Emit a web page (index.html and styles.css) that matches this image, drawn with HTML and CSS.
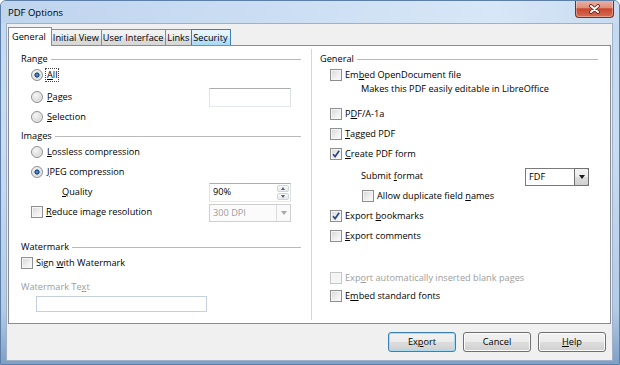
FILE: index.html
```html
<!DOCTYPE html>
<html lang="en">
<head>
  <meta charset="UTF-8">
  <title>PDF Options</title>
  <link rel="stylesheet" href="styles.css">
</head>
<body>
<div class="window">
  <div class="titlebar">
    <span class="title">PDF Options</span>
    <span class="close">
      <svg width="11" height="10" viewBox="0 0 11 10">
        <path d="M2 2 L9 8 M9 2 L2 8" stroke="#5b1c12" stroke-width="3.6" stroke-linecap="round" fill="none"/>
        <path d="M2 2 L9 8 M9 2 L2 8" stroke="#ffffff" stroke-width="2" stroke-linecap="round" fill="none"/>
      </svg>
    </span>
  </div>

  <div class="client">
    <div class="tabs">
      <span class="tab active">General</span>
      <span class="tab">Initial View</span>
      <span class="tab">User Interface</span>
      <span class="tab">Links</span>
      <span class="tab hot">Security</span>
    </div>

    <div class="panel">
      <div class="col col-left">
        <div class="head"><span>Range</span></div>
        <div class="opt"><span class="radio on"></span><span class="focus"><u>A</u>ll</span></div>
        <div class="opt gap-s"><span class="radio"></span><span><u>P</u>ages</span><span class="field textbox"></span></div>
        <div class="opt"><span class="radio"></span><span><u>S</u>election</span></div>

        <div class="head gap-s"><span>Images</span></div>
        <div class="opt"><span class="radio"></span><span><u>L</u>ossless compression</span></div>
        <div class="opt"><span class="radio on"></span><span><u>J</u>PEG compression</span></div>
        <div class="opt sub">
          <span><u>Q</u>uality</span>
          <span class="field spin">
            <span class="spin-value">90%</span>
            <span class="spin-buttons"><span class="spin-btn"><i class="arrow-up"></i></span><span class="spin-btn"><i class="arrow-down"></i></span></span>
          </span>
        </div>
        <div class="opt">
          <span class="check"></span><span><u>R</u>educe image resolution</span>
          <span class="field select disabled"><span class="select-value">300 DPI</span><span class="select-btn"><i class="arrow-down big"></i></span></span>
        </div>

        <div class="head gap-l"><span>Watermark</span></div>
        <div class="opt flush"><span class="check"></span><span>Sign <u>w</u>ith Watermark</span></div>
        <div class="caption disabled">Watermark Te<u>x</u>t</div>
        <div class="textbox wm"></div>
      </div>

      <div class="col col-right">
        <div class="head"><span>General</span></div>
        <div class="opt"><span class="check"></span><span>Em<u>b</u>ed OpenDocument file</span></div>
        <div class="note">Makes this PDF easily editable in LibreOffice</div>
        <div class="opt gap-m"><span class="check"></span><span>P<u>D</u>F/A-1a</span></div>
        <div class="opt"><span class="check"></span><span><u>T</u>agged PDF</span></div>
        <div class="opt"><span class="check on"><svg width="10" height="10" viewBox="0 0 10 10"><path d="M2 5.2 L4.1 7.6 L8.2 1.8" stroke="#2c4a86" stroke-width="1.7" fill="none"/></svg></span><span><u>C</u>reate PDF form</span></div>
        <div class="opt sub gap-s">
          <span>Submit <u>f</u>ormat</span>
          <span class="field select fdf"><span class="select-value">FDF</span><span class="select-btn"><i class="arrow-down big"></i></span></span>
        </div>
        <div class="opt nested"><span class="check"></span><span>Allow duplicate field <u>n</u>ames</span></div>
        <div class="opt"><span class="check on"><svg width="10" height="10" viewBox="0 0 10 10"><path d="M2 5.2 L4.1 7.6 L8.2 1.8" stroke="#2c4a86" stroke-width="1.7" fill="none"/></svg></span><span>Export <u>b</u>ookmarks</span></div>
        <div class="opt"><span class="check"></span><span><u>E</u>xport comments</span></div>
        <div class="opt disabled gap-xl"><span class="check"></span><span>Exp<u>o</u>rt automatically inserted blank pages</span></div>
        <div class="opt tight"><span class="check"></span><span>E<u>m</u>bed standard fonts</span></div>
      </div>
    </div>

    <div class="actions">
      <button class="btn default">Ex<u>p</u>ort</button>
      <button class="btn">Cancel</button>
      <button class="btn"><u>H</u>elp</button>
    </div>
  </div>
</div>
</body>
</html>
```

FILE: styles.css
```css
* { box-sizing: border-box; }
body { margin: 0; font-family: "Open Sans", sans-serif; font-size: 9.2px; line-height: 12px; color: #000; background: #fff; }
u { text-decoration: underline; text-underline-offset: 1px; }
i { display: block; }

/* window frame */
.window { width: 620px; height: 365px; display: flex; flex-direction: column; border: 1px solid #5d7ea6; border-radius: 6px 6px 0 0; overflow: hidden; background: linear-gradient(180deg, #c4d9f0 0, #c9dcf1 40%, #b4cbe6 85%, #7f9fc6 100%); }
.titlebar { display: flex; align-items: flex-start; height: 22px; flex: none; background: linear-gradient(90deg, #bfd5ee 0, #cbdef3 45%, #d8e7f7 80%, #c8dbf1 100%); }
.title { padding: 6px 0 0 7px; font-size: 9.5px; }
.close { display: flex; align-items: center; justify-content: center; width: 39px; height: 18px; margin: -1px 5px 0 auto; border: 1px solid #7a2c1f; border-top: none; border-radius: 0 0 4px 4px; background: linear-gradient(180deg, #ebb3a6 0, #df8f7c 45%, #c9462e 52%, #d66d52 100%); box-shadow: inset 0 0 0 1px rgba(255, 255, 255, 0.35); }

.client { flex: 1; display: flex; flex-direction: column; margin: 0 6px 3px 5px; padding: 3px 1px 0; border: 1px solid #9eb1c8; background: #f0f0f0; }

/* tabs */
.tabs { display: flex; align-items: flex-end; height: 18px; flex: none; position: relative; z-index: 1; }
.tab { display: flex; align-items: center; height: 16px; padding: 0 2px 0 1px; margin-right: -1px; border: 1px solid #898c95; border-bottom: none; background: linear-gradient(180deg, #f4f4f4 0, #ebebeb 50%, #dfdfdf 51%, #d6d6d6 100%); }
.tab.active { height: 19px; margin-bottom: -1px; padding: 0 5px 0 3px; background: #fff; position: relative; z-index: 2; }
.tab.hot { border-color: #3c7fb1; background: linear-gradient(180deg, #eaf6fd 0, #d9f0fc 50%, #bee6fd 51%, #a7d9f5 100%); position: relative; z-index: 1; }

/* page */
.panel { display: flex; height: 279px; flex: none; border: 1px solid #898c95; background: #fff; }
.col { display: flex; flex-direction: column; padding-top: 6px; }
.col-left { width: 302px; padding-left: 12px; padding-right: 10px; }
.col-right { flex: 1; margin: 3px 0; padding: 3px 12px 0 8px; border-left: 1px solid #d5d5d5; }

.head { display: flex; align-items: center; height: 14px; }
.head::after { content: ""; flex: 1; margin-left: 3px; border-top: 1px solid #b9b9b9; }
.opt { display: flex; align-items: center; gap: 3px; height: 20px; padding-left: 10px; }
.head + .opt { margin-top: -1px; }
.opt.sub { padding-left: 41px; }
.opt.nested { padding-left: 42px; }
.opt.flush { padding-left: 0; }
.note { display: flex; align-items: center; height: 14px; margin-top: -3px; padding-left: 41px; }
.caption { display: flex; align-items: center; height: 14px; margin-top: 7px; }

.gap-s { margin-top: 2px; }
.head.gap-s { margin-top: 2px; }
.gap-m { margin-top: 8px; }
.gap-l { margin-top: 18px; }
.gap-xl { margin-top: 22px; }
.tight { margin-top: -2px; }

.disabled { color: #9d9d9d; }
.focus { outline: 1px dotted #444; padding: 0 1px; margin-left: -1px; }

/* controls */
.radio { width: 12px; height: 12px; flex: none; border: 1px solid #8e8f8f; border-radius: 50%; margin-right: 1px; background: radial-gradient(circle at 40% 35%, #f6f6f6 0, #e0e0e0 50%, #c6c6c6 100%); box-shadow: inset 0 0 0 1px #f0f0f0; }
.radio.on { background: radial-gradient(circle at 50% 50%, #7fb6e6 0, #2a67a8 1.3px, #16406f 2.3px, rgba(22, 64, 111, 0) 2.8px), radial-gradient(circle at 40% 35%, #f6f6f6 0, #e0e0e0 50%, #c6c6c6 100%); }
.check { display: flex; align-items: center; justify-content: center; width: 12px; height: 12px; flex: none; border: 1px solid #8e8f8f; background: linear-gradient(135deg, #d6d6d6 0, #f0f0f0 60%, #fbfbfb 100%); box-shadow: inset 0 0 0 1px #f6f6f6; }
.opt.disabled .check { border-color: #c6c6c6; background: #f4f4f4; }

.textbox { border: 1px solid #abadb3; border-color: #abadb3 #dbdfe6 #e3e9ef #e2e3ea; background: #fff; }
.field { margin-left: auto; margin-right: 10px; width: 82px; height: 19px; }
.wm { width: 171px; height: 16px; margin: 2px 0 0 15px; border-color: #c5d0dc; }

.spin { display: flex; border: 1px solid #abadb3; border-color: #abadb3 #dbdfe6 #e3e9ef #e2e3ea; background: #fff; }
.spin-value { flex: 1; display: flex; align-items: center; padding-left: 3px; }
.spin-buttons { display: flex; flex-direction: column; width: 12px; margin: 1px 1px 1px 0; gap: 1px; }
.spin-btn { flex: 1; display: flex; align-items: center; justify-content: center; border: 1px solid #d4d4d4; border-radius: 2px; background: linear-gradient(180deg, #f8f8f8, #e9e9e9); }
.arrow-up { border-left: 2.5px solid transparent; border-right: 2.5px solid transparent; border-bottom: 3px solid #4d6185; }
.arrow-down { border-left: 2.5px solid transparent; border-right: 2.5px solid transparent; border-top: 3px solid #4d6185; }
.arrow-down.big { border-left-width: 3.5px; border-right-width: 3.5px; border-top: 4px solid #1a1a1a; }

.select { display: flex; height: 18px; margin-top: 1px; border: 1px solid #a8a8a8; background: #fff; }
.select-value { flex: 1; display: flex; align-items: center; padding-left: 3px; }
.select-btn { display: flex; align-items: center; justify-content: center; width: 14px; border-left: 1px solid #a8a8a8; background: linear-gradient(180deg, #f3f3f3 0, #ebebeb 50%, #dddddd 51%, #cfcfcf 100%); }
.select.disabled { border-color: #cfcfcf; background: #fbfbfb; }
.select.disabled .select-btn { border-left-color: #dcdcdc; background: #fafafa; }
.select.disabled .arrow-down.big { border-top-color: #a8a8a8; }
.select.fdf { width: 64px; margin-right: 9px; border-color: #7a7a7a; }
.select.fdf .select-btn { border: 1px solid #707070; margin: -1px -1px -1px 0; width: 15px; border-radius: 0 2px 2px 0; }

/* dialog buttons */
.actions { display: flex; justify-content: flex-end; gap: 7px; margin-top: 8px; padding-right: 5px; }
.btn { width: 68px; height: 20px; padding: 0; font: inherit; color: #000; border: 1px solid #707070; border-radius: 3px; background: linear-gradient(180deg, #f2f2f2 0, #ebebeb 50%, #dddddd 51%, #cfcfcf 100%); box-shadow: inset 0 0 0 1px #fbfbfb; }
.btn.default { border-color: #3c7fb1; box-shadow: inset 0 0 0 1px #a4dcf8; }
```
